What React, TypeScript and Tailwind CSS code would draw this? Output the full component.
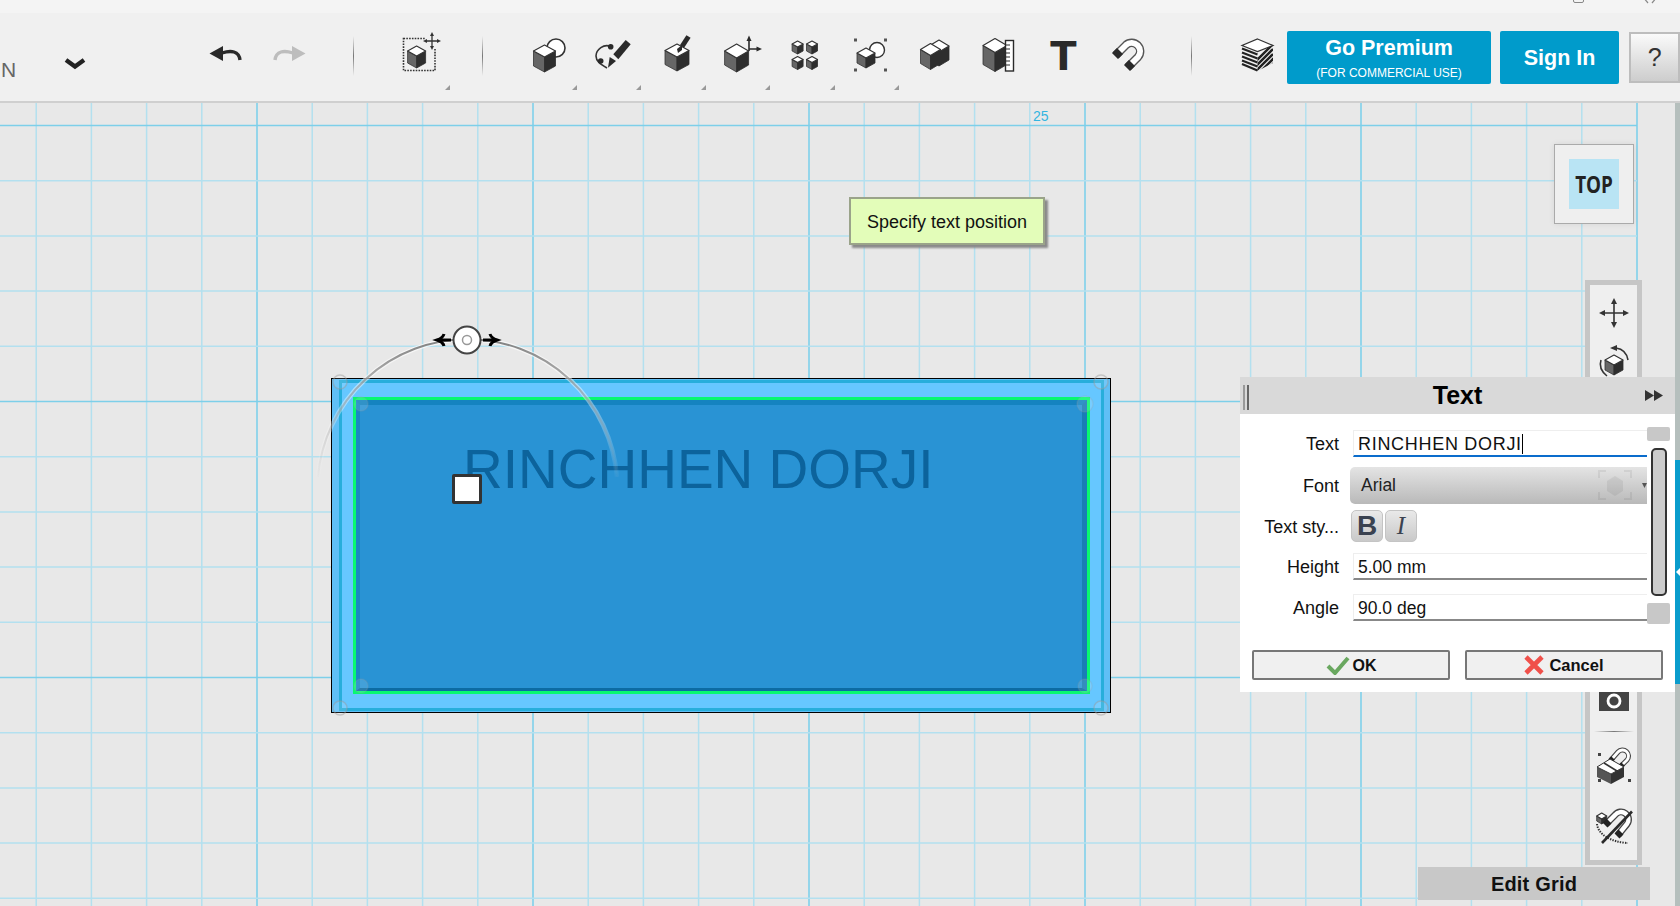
import type { ReactNode } from 'react'

const sans = "font-['Liberation_Sans',Arial,sans-serif]"

// iso cube used by most of the toolbar icons
const Cube = ({ x, y, w, h, d }: { x: number; y: number; w: number; h: number; d: number }) => (
  <g strokeLinejoin="round">
    <polygon points={`${x - w},${y} ${x},${y + h} ${x},${y + h + d} ${x - w},${y + d}`} fill="#666" stroke="#333" strokeWidth="0.8" />
    <polygon points={`${x + w},${y} ${x},${y + h} ${x},${y + h + d} ${x + w},${y + d}`} fill="#2e2e2e" stroke="#2e2e2e" strokeWidth="0.8" />
    <polygon points={`${x},${y - h} ${x + w},${y} ${x},${y + h} ${x - w},${y}`} fill="#fff" stroke="#333" strokeWidth="1.2" />
  </g>
)

const Svg = ({ children }: { children: ReactNode }) => (
  <svg width="48" height="48" viewBox="0 0 48 48" fill="none">
    {children}
  </svg>
)

const Magnet = () => (
  <g>
    <path d="M13 25 L23 15 A8.5 8.5 0 0 1 35 27 L25 37" stroke="#555" strokeWidth="8.5" />
    <path d="M13 25 L23 15 A8.5 8.5 0 0 1 35 27 L25 37" stroke="#fff" strokeWidth="5.8" />
    <path d="M12 26 L17 21 M24 38 L29 33" stroke="#2a2a2a" strokeWidth="8.5" />
  </g>
)

const toolIcons: ReactNode[] = [
  <>
    <circle cx="32" cy="18" r="9" fill="#fff" stroke="#333" strokeWidth="1.6" />
    <Cube x={20.5} y={21} w={11} h={6} d={15} />
  </>,
  <>
    <path d="M22.7 16.7 C16 13 8 20 8 26 C8 31 12 34 19 38" stroke="#333" strokeWidth="1.6" />
    <circle cx="22.7" cy="16.7" r="2.8" fill="#2a2a2a" />
    <circle cx="12.7" cy="31" r="2.8" fill="#2a2a2a" />
    <polygon points="37.7,10 42.7,14.3 30.3,29.3 25.3,24.3" fill="#2a2a2a" />
    <polygon points="28,31 21.7,27 20,37.7" fill="#2a2a2a" />
  </>,
  <>
    <Cube x={24} y={20.5} w={12} h={6.5} d={14} />
    <path d="M35.5 6.5 L29 16.5" stroke="#2a2a2a" strokeWidth="5" />
    <polygon points="29,15 24,19 25,23 29,20" fill="#2a2a2a" />
  </>,
  <>
    <Cube x={19.6} y={21} w={12} h={7} d={14} />
    <path d="M32 21 V9 M32 19 H42" stroke="#2a2a2a" strokeWidth="1.6" />
    <polygon points="32,5.5 29.5,11 34.5,11" fill="#2a2a2a" />
    <polygon points="45,19 39.5,16.5 39.5,21.5" fill="#2a2a2a" />
  </>,
  <>
    <Cube x={16.6} y={14} w={5.5} h={3} d={7} />
    <Cube x={31} y={14} w={5.5} h={3} d={7} />
    <Cube x={16.6} y={29.5} w={5.5} h={3} d={7} />
    <Cube x={31} y={29.5} w={5.5} h={3} d={7} />
  </>,
  <>
    <circle cx="31" cy="20" r="7.5" fill="#fff" stroke="#333" strokeWidth="1.4" />
    <Cube x={20} y={23} w={9} h={5} d={10} />
    <rect x="8" y="8.5" width="3" height="3" fill="#555" />
    <rect x="38" y="8.5" width="3" height="3" fill="#555" />
    <rect x="8" y="38.5" width="3" height="3" fill="#555" />
    <rect x="38" y="38.5" width="3" height="3" fill="#555" />
  </>,
  <>
    <Cube x={29} y={16} w={10} h={6} d={14} />
    <Cube x={20.5} y={19.5} w={10} h={6} d={14} />
  </>,
  <>
    <Cube x={20} y={15.5} w={12} h={7} d={19} />
    <rect x="30.5" y="10.5" width="8" height="30.5" fill="#fff" stroke="#2a2a2a" strokeWidth="1.4" />
    <path d="M31 15 H35 M31 19 H35 M31 23 H35 M31 27 H35 M31 31 H35 M31 35 H35" stroke="#2a2a2a" strokeWidth="1.2" />
  </>,
  <text x="24.5" y="40" textAnchor="middle" fontSize="38.5" fontWeight="700" fontFamily="DejaVu Sans, sans-serif" fill="#2a2a2a">
    T
  </text>,
  <Magnet />,
]

const ToolSlot = ({ children, corner = true }: { children: ReactNode; corner?: boolean }) => (
  <div className="relative w-[64.4px] shrink-0 flex justify-center">
    <Svg>{children}</Svg>
    {corner && (
      <svg className="absolute top-[55px] right-[3px]" width="5" height="5" viewBox="0 0 5 5">
        <polygon points="5,0 5,5 0,5" fill="#999" />
      </svg>
    )}
  </div>
)

const Separator = ({ className }: { className: string }) => (
  <div className={`w-[1.5px] h-[40px] mt-[6px] shrink-0 bg-gradient-to-b from-transparent via-[#777] to-transparent ${className}`} />
)

const Toolbar = () => (
  <div className={`h-[90px] shrink-0 bg-[#f0f0f0] border-b-2 border-[#cfcfcf] flex items-start pt-[17px] ${sans}`}>
    <div className="w-[60px] pl-[1px] pt-[25px] text-[21px] leading-[30px] text-[#666] shrink-0">N</div>
    <div className="w-[30px] shrink-0 pt-[27px] flex justify-center">
      <svg width="24" height="14" viewBox="0 0 24 14" fill="none">
        <path d="M3 3 L12 9.5 L21 3" stroke="#222" strokeWidth="4.4" />
      </svg>
    </div>
    <div className="w-[103px] shrink-0" />
    <ToolSlot corner={false}>
      <polygon points="8.5,23.5 22,16 22,31" fill="#2a2a2a" />
      <path d="M21 23 C30 20 38 21 39 30" stroke="#2a2a2a" strokeWidth="3.4" />
    </ToolSlot>
    <ToolSlot corner={false}>
      <polygon points="39.5,23.5 26,16 26,31" fill="#bdbdbd" />
      <path d="M27 23 C18 20 10 21 9 30" stroke="#bdbdbd" strokeWidth="3.4" />
    </ToolSlot>
    <Separator className="ml-[31px]" />
    <div className="ml-[34px]">
      <ToolSlot>
        <rect x="7.5" y="8.5" width="31.5" height="32" stroke="#333" strokeWidth="1.6" strokeDasharray="1.6 1.2" />
        <rect x="29" y="3" width="14" height="15" fill="#f0f0f0" />
        <Cube x={20.6} y={21} w={9} h={5} d={12} />
        <path d="M36 4 V18 M29 11 H43" stroke="#333" strokeWidth="1.3" />
        <polygon points="36,2 34,6 38,6" fill="#333" />
        <polygon points="36,20 34,16 38,16" fill="#333" />
        <polygon points="27,11 31,9 31,13" fill="#333" />
        <polygon points="45,11 41,9 41,13" fill="#333" />
      </ToolSlot>
    </div>
    <Separator className="ml-[29px]" />
    <div className="ml-[32.5px] flex">
      {toolIcons.map((icon, i) => (
        <ToolSlot key={i} corner={i < 6}>
          {icon}
        </ToolSlot>
      ))}
    </div>
    <Separator className="ml-[31px]" />
    <div className="ml-[41px] w-[48px] shrink-0">
      <Svg>
        <clipPath id="layerRight">
          <polygon points="24.5,21.5 40,15.5 40,33 24.5,41" />
        </clipPath>
        <polygon points="24.5,9 40,15.5 24.5,21.5 9,15.5" fill="#fff" stroke="#333" strokeWidth="1.2" />
        <path d="M9 18.5 L24.5 24.5 M9 22.5 L24.5 28.5 M9 26.5 L24.5 32.5 M9 30.5 L24.5 36.5 M9 34 L24.5 40.5" stroke="#222" strokeWidth="2.2" />
        <g clipPath="url(#layerRight)">
          <path d="M20 34 L40 14 M20 39 L40 19 M20 44 L40 24 M22 47 L42 27 M27 47 L47 27" stroke="#222" strokeWidth="2.3" />
        </g>
      </Svg>
    </div>
    <div className="ml-[6px] mt-[1px] w-[204px] h-[53px] shrink-0 rounded-[2px] bg-[#009bcb] text-white flex flex-col items-center">
      <div className="text-[21.5px] leading-[24px] font-bold mt-[5px]">Go Premium</div>
      <div className="text-[12px] leading-[14px] mt-[6px]">(FOR COMMERCIAL USE)</div>
    </div>
    <div className="ml-[9px] mt-[1px] w-[119px] h-[53px] shrink-0 rounded-[2px] bg-[#009bcb] text-white text-[21.5px] font-bold flex items-center justify-center pt-[2px]">
      Sign In
    </div>
    <div className="ml-[10px] mt-[2px] w-[51px] h-[51px] shrink-0 border-2 border-[#bdbdbd] bg-gradient-to-b from-[#fafafa] to-[#cdcdcd] text-[25px] text-[#333] flex items-center justify-center">
      ?
    </div>
  </div>
)

// grid lines, in canvas coordinates (canvas starts at y 103)
const vLines = Array.from({ length: 30 }, (_, i) => 36.2 + i * 55.2)
const hLines = Array.from({ length: 15 }, (_, i) => 22.5 + i * 55.2)

const CanvasGrid = () => (
  <svg className="absolute inset-0" width="1680" height="803">
    {vLines.map((x, i) => (
      <line key={x} x1={x} x2={x} y1="0" y2="803" stroke={(i + 1) % 5 === 0 ? '#78cfeb' : '#b3e0ef'} strokeWidth="1.5" />
    ))}
    {hLines.map((y, i) => (
      <line key={y} x1="0" x2="1637" y1={y} y2={y} stroke={i % 5 === 0 ? '#7dcfe9' : '#b3e0ef'} strokeWidth="1.5" />
    ))}
  </svg>
)

const handles = [
  [340, 279, 7, 0.45],
  [1101, 279, 7, 0.45],
  [340, 605, 7, 0.45],
  [1101, 605, 7, 0.45],
  [361, 301, 7, 0.2],
  [1085, 301, 8, 0.2],
  [361, 583, 7, 0.2],
  [1085, 583, 7, 0.2],
]

const Shape = () => (
  <>
    <div className="absolute left-[331px] top-[275px] w-[780px] h-[335px] border-[1.5px] border-black bg-[#5fbff6] pl-[7px] pt-[1px] pr-[6px] pb-[1px]">
      <div className="w-full h-full border-[3px] border-[#27aedb] bg-[#66c7ff] pl-[11px] pt-[14px] pr-[11px] pb-[14px]">
        <div className="w-full h-full border-[3px] border-[#08f870] bg-[#2690d2]/95">
          <div className="w-full h-full border-t-[5px] border-l-[4px] border-r-[5px] border-b-[3px] border-t-[#1583c0] border-l-[#1a86c4] border-r-[#1a7db6] border-b-[#0c6ba3]" />
        </div>
      </div>
    </div>
    <div className={`absolute left-[463px] top-[336px] text-[55px] leading-[60px] text-[#0c639c] whitespace-nowrap ${sans}`}>
      RINCHHEN DORJI
    </div>
    <svg className="absolute inset-0" width="1680" height="803" fill="none">
      <defs>
        <linearGradient id="arcFade" x1="0" y1="236" x2="0" y2="380" gradientUnits="userSpaceOnUse">
          <stop offset="0" stopColor="#808080" />
          <stop offset="0.4" stopColor="#929292" stopOpacity="0.55" />
          <stop offset="1" stopColor="#aaa" stopOpacity="0" />
        </linearGradient>
        <linearGradient id="arcFadeWhite" x1="0" y1="236" x2="0" y2="380" gradientUnits="userSpaceOnUse">
          <stop offset="0" stopColor="#fff" stopOpacity="0.7" />
          <stop offset="1" stopColor="#fff" stopOpacity="0" />
        </linearGradient>
      </defs>
      {handles.map(([cx, cy, r, o], i) => (
        <circle key={i} cx={cx} cy={cy} r={r} fill="#ffffff" fillOpacity="0.12" stroke="#999" strokeOpacity={o} strokeWidth="1.5" />
      ))}
      <path d="M318 374 A150 150 0 0 1 617 374" stroke="url(#arcFadeWhite)" strokeWidth="4.5" />
      <path d="M318 374 A150 150 0 0 1 617 374" stroke="url(#arcFade)" strokeWidth="2" />
      <path d="M451 237 H438 M483 237 H496" stroke="#000" strokeWidth="2.8" />
      <path d="M444 231 Q443 235 437 237 Q443 239 444 243 M490 231 Q491 235 497 237 Q491 239 490 243" stroke="#000" strokeWidth="3" />
      <circle cx="467" cy="237" r="13.5" fill="#fff" stroke="#444" strokeWidth="2" />
      <circle cx="467" cy="237" r="4.5" fill="#fff" stroke="#999" strokeWidth="1.5" />
    </svg>
    <div className="absolute left-[452px] top-[371px] w-[30px] h-[30px] bg-white border-[3px] border-[#333] rounded-[2px]" />
  </>
)

const fieldCls = 'h-[27px] w-[294px] bg-white border-t border-l border-[#eeeeee] border-b-2 border-b-[#888] pl-[4px] text-[17.5px] leading-[26px] text-[#111]'

const FieldRow = ({ label, children, className }: { label: string; children: ReactNode; className: string }) => (
  <div className={`flex items-center ${className}`}>
    <div className="w-[99px] pt-[2px] text-right text-[18px] text-[#111] whitespace-nowrap">{label}</div>
    <div className="ml-[14px]">{children}</div>
  </div>
)

const TextPanel = () => (
  <div className={`absolute left-[1240px] top-[274px] w-[435px] h-[315px] bg-white ${sans}`}>
    <div className="relative h-[37px] bg-[#d9d9d9] flex items-center justify-center pt-px text-[25px] font-bold text-black">
      Text
      <div className="absolute left-[3px] top-[8px] w-[6px] h-[25px] border-l-2 border-r-2 border-l-[#999] border-r-[#666]" />
      <svg className="absolute left-[404px] top-[12px]" width="22" height="13" viewBox="0 0 22 13">
        <polygon points="1,1 10,6.5 1,12" fill="#333" />
        <polygon points="10,1 19,6.5 10,12" fill="#333" />
      </svg>
    </div>
    <div className="relative pt-[16px]">
      <FieldRow label="Text" className="h-[27px]">
        <div className="h-[27px] w-[294px] border-t border-l border-[#eeeeee] border-b-2 border-b-[#0a6ccc] pl-[4px] text-[18px] leading-[26px] tracking-[0.7px] text-[#111] whitespace-nowrap flex items-start">
          RINCHHEN DORJI
          <span className="w-px h-[20px] mt-[3px] bg-black" />
        </div>
      </FieldRow>
      <FieldRow label="Font" className="h-[37px] mt-[10px]">
        <div className="relative -ml-[3px] w-[297px] h-[37px] rounded-l-[5px] bg-gradient-to-b from-[#e4e4e4] to-[#b9b9b9] pl-[11px] text-[17.5px] leading-[37px] text-[#222]">
          Arial
          <svg className="absolute left-[248px] top-[3px] opacity-[0.07]" width="34" height="30" viewBox="0 0 34 30" fill="none">
            <path d="M1 8 V1 H8 M26 1 H33 V8 M1 22 V29 H8 M26 29 H33 V22" stroke="#222" strokeWidth="2" />
            <polygon points="17,6 25,11 25,21 17,26 9,21 9,11" fill="#222" />
          </svg>
          <svg className="absolute right-0 top-[16px]" width="5" height="5" viewBox="0 0 5 5">
            <polygon points="0,0 5,0 2.5,5" fill="#555" />
          </svg>
        </div>
      </FieldRow>
      <FieldRow label="Text sty..." className="h-[32px] mt-[6px]">
        <div className="-ml-[2px] flex gap-[2px]">
          <div className="w-[32px] h-[32px] rounded-[5px] border border-[#c4c4c4] bg-gradient-to-b from-[#e9e9e9] to-[#c9c9c9] flex items-center justify-center text-[28px] font-bold text-[#3a4250]">
            B
          </div>
          <div className="w-[32px] h-[32px] rounded-[5px] border border-[#c4c4c4] bg-gradient-to-b from-[#e9e9e9] to-[#c9c9c9] flex items-center justify-center text-[25px] italic text-[#3a4250] font-['Liberation_Serif',serif]">
            I
          </div>
        </div>
      </FieldRow>
      <FieldRow label="Height" className="h-[27px] mt-[11px]">
        <div className={fieldCls}>5.00 mm</div>
      </FieldRow>
      <FieldRow label="Angle" className="h-[27px] mt-[14px]">
        <div className={fieldCls}>90.0 deg</div>
      </FieldRow>
      <div className="absolute left-[407px] top-[13px] w-[23px] h-[197px] flex flex-col items-center">
        <div className="w-[23px] h-[14px] bg-[#c8c8c8] rounded-[2px]" />
        <div className="w-[16px] h-[148px] mt-[7px] bg-[#cccccc] border-2 border-[#333] rounded-[5px]" />
        <div className="w-[23px] h-[21px] mt-[7px] bg-[#c8c8c8] rounded-[2px]" />
      </div>
      <div className="flex mt-[29px] pl-[12px] gap-[15px]">
        <div className="w-[198px] h-[30px] border-2 border-[#777] rounded-[2px] bg-[#f0f0f0] flex items-center justify-center gap-[3px] text-[16px] font-bold text-[#111]">
          <svg width="24" height="20" viewBox="0 0 24 20" fill="none">
            <path d="M2 11 L9 18 L22 3" stroke="#6aa860" strokeWidth="4" />
          </svg>
          <span className="pt-px">OK</span>
        </div>
        <div className="w-[198px] h-[30px] border-2 border-[#777] rounded-[2px] bg-[#f0f0f0] flex items-center justify-center gap-[5px] text-[16.5px] font-bold text-[#111]">
          <svg width="20" height="20" viewBox="0 0 20 20" fill="none">
            <path d="M2 2 L18 18 M18 2 L2 18" stroke="#f0504a" strokeWidth="4.6" />
          </svg>
          <span className="pt-px">Cancel</span>
        </div>
      </div>
    </div>
  </div>
)

const SideBar = () => (
  <div className="absolute left-[1585px] top-[177px] w-[57px] h-[585px] border-[5px] border-[#c6c6c6] bg-[#efefef] flex flex-col items-center pt-[4px]">
    <Svg>
      <path d="M24 11 V37 M11 24 H37" stroke="#333" strokeWidth="1.6" />
      <polygon points="24,9 21,15 27,15" fill="#333" />
      <polygon points="24,39 21,33 27,33" fill="#333" />
      <polygon points="9,24 15,21 15,27" fill="#333" />
      <polygon points="39,24 33,21 33,27" fill="#333" />
    </Svg>
    <div className="mt-[3px]">
      <Svg>
        <Cube x={24} y={20} w={9} h={5} d={10} />
        <path d="M26 8 C33 9 37 14 38 20" stroke="#333" strokeWidth="1.6" />
        <polygon points="20,8 27,5 27,11" fill="#333" />
        <path d="M11 20 C9 26 12 32 17 36" stroke="#333" strokeWidth="1.6" />
      </Svg>
    </div>
    <div className="mt-[288px]">
      <Svg>
        <rect x="9" y="12" width="30" height="23" fill="#444" />
        <circle cx="24" cy="25" r="6" stroke="#fff" strokeWidth="2.8" />
      </Svg>
    </div>
    <div className="mt-[7px] w-[40px] h-px bg-gradient-to-r from-transparent via-[#777] to-transparent" />
    <div className="mt-[9px]">
      <Svg>
        <path d="M21 19 L28 11 A5.2 5.2 0 0 1 37 19 L31 25" stroke="#444" strokeWidth="5" />
        <path d="M21 19 L28 11 A5.2 5.2 0 0 1 37 19 L31 25" stroke="#fff" strokeWidth="2.8" />
        <path d="M20 20 L23 17 M30 26 L33 23" stroke="#222" strokeWidth="5" />
        <polygon points="7,26 7,36 21,43 21,33" fill="#555" />
        <polygon points="21,33 21,43 34,36 34,26" fill="#333" />
        <polygon points="7,26 20,18 34,26 21,33" fill="#fff" stroke="#333" strokeWidth="1" />
        <path d="M14 22 L27 30" stroke="#333" strokeWidth="1.6" />
        <rect x="8" y="12" width="3" height="3" fill="#444" />
        <rect x="8" y="38" width="3" height="3" fill="#444" />
        <rect x="38" y="38" width="3" height="3" fill="#444" />
      </Svg>
    </div>
    <div className="mt-[13px]">
      <Svg>
        <Cube x={11.7} y={14} w={5} h={3} d={5} />
        <path d="M7 22 C8 32 20 40 38 41" stroke="#333" strokeWidth="2" strokeDasharray="1.4 1.2" />
        <path d="M16 22 L25 13 A7.5 7.5 0 0 1 37 22 L28 33" stroke="#444" strokeWidth="7" />
        <path d="M16 22 L25 13 A7.5 7.5 0 0 1 37 22 L28 33" stroke="#fff" strokeWidth="4.4" />
        <path d="M15 23 L19 19 M27 34 L31 30" stroke="#222" strokeWidth="7" />
        <path d="M42 9.5 L12 41" stroke="#2a2a2a" strokeWidth="2.6" />
      </Svg>
    </div>
  </div>
)

const App = () => {
  return (
    <div className={`w-[1680px] h-[906px] overflow-hidden flex flex-col bg-[#e8e8e8] ${sans}`}>
      <div className="relative h-[13px] shrink-0 bg-[#f4f4f4]">
        <div className="absolute left-[1573px] -top-[6px] w-[11px] h-[9px] border border-[#888] rounded-[2px]" />
        <svg className="absolute left-[1642px] top-0" width="16" height="4" viewBox="0 0 16 4" fill="none">
          <path d="M1 -3 L6 3 M15 -3 L10 3" stroke="#888" strokeWidth="1.2" />
        </svg>
      </div>
      <Toolbar />
      <div className="relative flex-1">
        <CanvasGrid />
        <div className="absolute left-[1033px] top-[5px] text-[14px] leading-[16px] text-[#35b5e0]">25</div>
        <Shape />
        <div className="absolute left-[849px] top-[94px] w-[196px] h-[48px] border-2 border-[#9aa38a] bg-[#e3fdb9] shadow-[3px_3px_2px_#8a8a8a] flex items-center justify-center pt-[3px] text-[18px] text-[#111]">
          Specify text position
        </div>
        <div className="absolute left-[1554px] top-[41px] w-[80px] h-[80px] border border-[#aaa] bg-[#efefef] shadow-[0_0_6px_rgba(0,0,0,0.08)] flex items-center justify-center">
          <div className="w-[50px] h-[50px] bg-[#b9e4f4] flex items-center justify-center">
            <span className="text-[23px] font-bold text-[#222] scale-x-[0.82] font-['Open_Sans',sans-serif]">TOP</span>
          </div>
        </div>
        <SideBar />
        <TextPanel />
        <div className="absolute left-[1418px] top-[764px] w-[232px] h-[33px] bg-[#c8c8c8] flex items-center justify-center text-[20px] font-bold tracking-[0.2px] text-[#111]">
          Edit Grid
        </div>
        <div className="absolute left-[1675px] top-0 bottom-0 w-[5px] bg-[#b5bfbd] flex flex-col">
          <div className="relative mt-[357px] h-[224px] bg-[#0a9ccc]">
            <svg className="absolute left-[1px] top-[108px]" width="4" height="8" viewBox="0 0 4 8">
              <polygon points="0,4 4,0 4,8" fill="#fff" />
            </svg>
          </div>
        </div>
      </div>
    </div>
  )
}

export default App
